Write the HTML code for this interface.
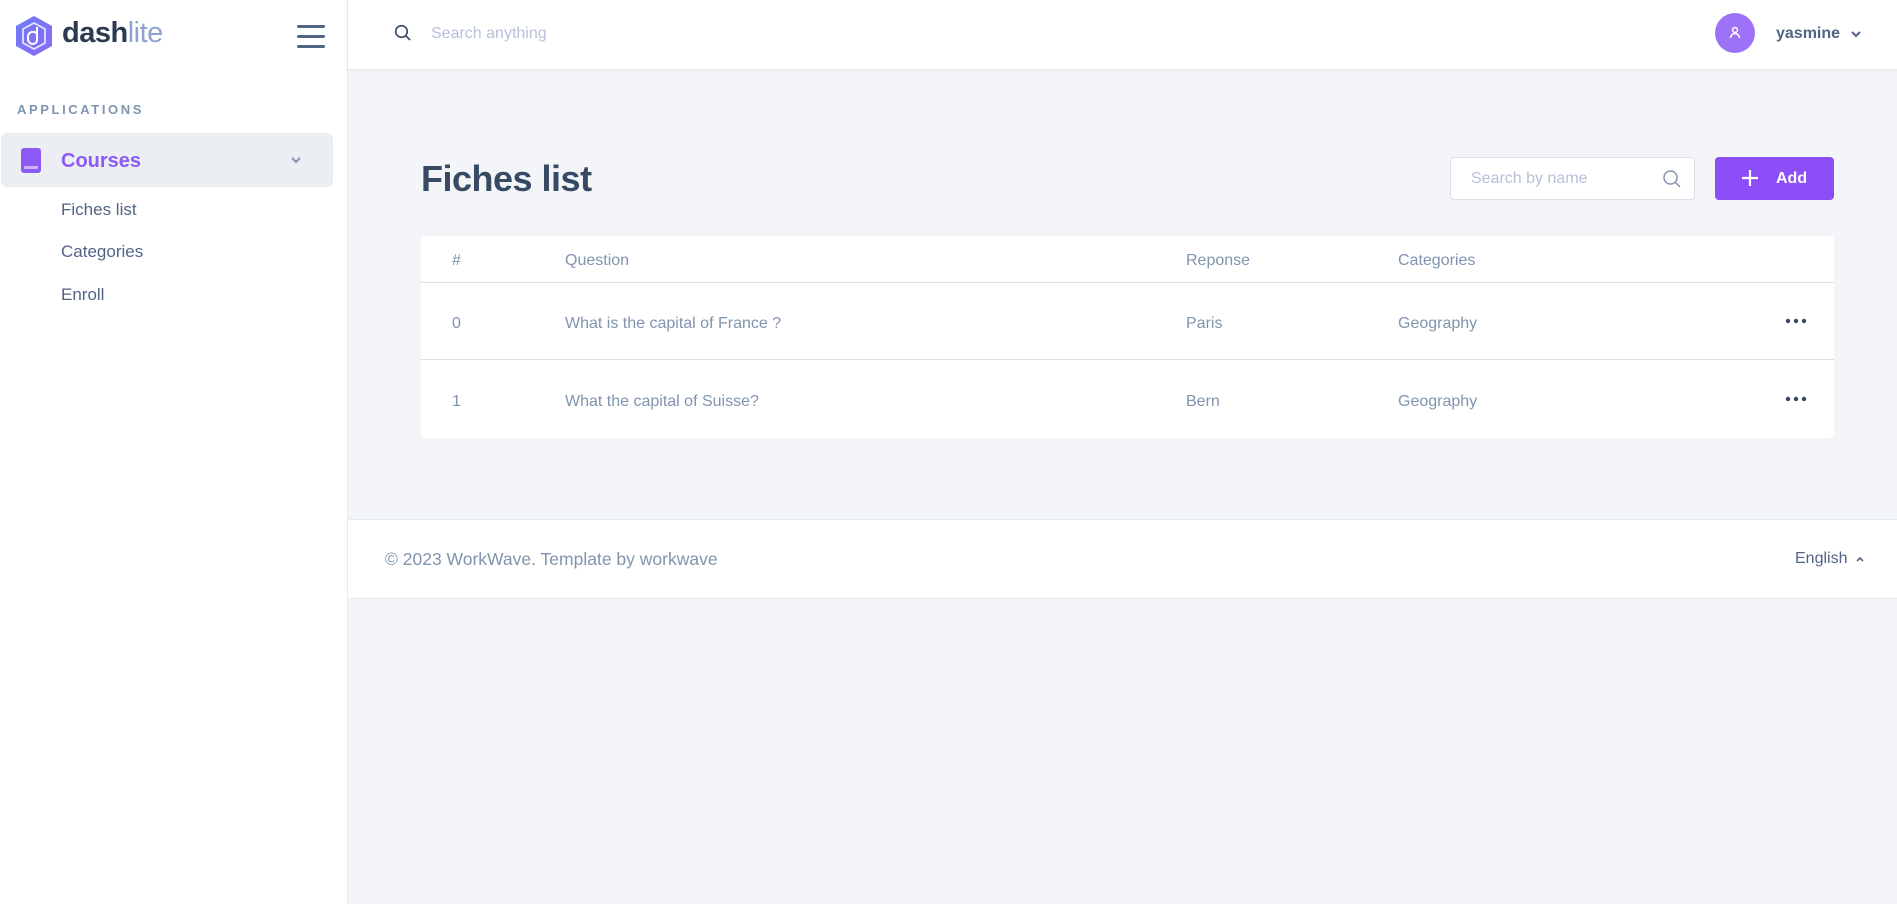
<!DOCTYPE html>
<html><head><meta charset="utf-8"><style>
*{box-sizing:border-box;margin:0;padding:0}
body{width:1897px;height:904px;background:#f4f5f8;font-family:"Liberation Sans",sans-serif;position:relative;overflow:hidden;color:#526484}
.side{position:absolute;left:0;top:0;width:348px;height:904px;background:#fff;border-right:1px solid #e5e9f2}
.hdr{position:absolute;left:348px;top:0;right:0;height:70px;background:#fff;border-bottom:1px solid #e5e9f2;box-shadow:0 1px 3px rgba(0,0,0,.04)}
.abs{position:absolute}
.card{position:absolute;left:421px;top:236px;width:1413px;height:202px;background:#fff;border-radius:4px}
.row{position:absolute;left:0;right:0;border-bottom:1px solid #dbdfea}
.t{position:absolute;font-size:16px;color:#8094ae;white-space:nowrap}
.dots{position:absolute}
</style></head><body>
<div class="side">
  <svg class="abs" style="left:15px;top:15px" width="38" height="42" viewBox="0 0 38 42">
    <defs><linearGradient id="g" x1="0" y1="0" x2="1" y2="1"><stop offset="0" stop-color="#6b7cf6"/><stop offset="1" stop-color="#8b6af7"/></linearGradient></defs>
    <polygon points="19,1 37,11 37,31 19,41 1,31 1,11" fill="url(#g)"/>
    <path d="M19 8 L30 14 V28 L19 34 L8 28 V14 Z" fill="none" stroke="#fff" stroke-width="1.8" opacity=".8"/>
    <path d="M22 12 V25 a4 4 0 0 1 -4 4 a5 5 0 0 1 -5 -5 v-3 a5 5 0 0 1 9 -2" fill="none" stroke="#fff" stroke-width="2"/>
  </svg>
  <div class="abs" style="left:62px;top:17px;font-size:29px;font-weight:bold;color:#2b3a4f;letter-spacing:-0.5px">dash<span style="color:#8ea3d3;font-weight:normal">lite</span></div>
  <div class="abs" style="left:297px;top:25px;width:28px;height:3px;background:#526484;border-radius:2px"></div>
  <div class="abs" style="left:297px;top:35px;width:28px;height:3px;background:#526484;border-radius:2px"></div>
  <div class="abs" style="left:297px;top:45px;width:28px;height:3px;background:#526484;border-radius:2px"></div>
  <div class="abs" style="left:17px;top:102px;font-size:13px;font-weight:bold;letter-spacing:2.6px;color:#8094ae">APPLICATIONS</div>
  <div class="abs" style="left:1px;top:133px;width:332px;height:54px;background:#ebeef2;border-radius:6px"></div>
  <div class="abs" style="left:21px;top:148px;width:20px;height:25px;background:#8d5af5;border-radius:3px"></div>
  <div class="abs" style="left:24px;top:166px;width:14px;height:3px;background:#c9b3fb;border-radius:1px"></div>
  <div class="abs" style="left:61px;top:150px;font-size:20px;font-weight:bold;color:#8d5af5">Courses</div>
  <svg class="abs" style="left:290px;top:156px" width="12" height="8" viewBox="0 0 12 8"><path d="M2 2 L6 6 L10 2" stroke="#8094ae" stroke-width="2" fill="none"/></svg>
  <div class="abs" style="left:61px;top:200px;font-size:17px;color:#526484">Fiches list</div>
  <div class="abs" style="left:61px;top:242px;font-size:17px;color:#526484">Categories</div>
  <div class="abs" style="left:61px;top:285px;font-size:17px;color:#526484">Enroll</div>
</div>
<div class="hdr">
  <svg class="abs" style="left:46px;top:24px" width="18" height="18" viewBox="0 0 18 18"><circle cx="7.5" cy="7.5" r="5.8" stroke="#364a63" stroke-width="1.6" fill="none"/><path d="M12 12 L16 16" stroke="#364a63" stroke-width="1.6"/></svg>
  <div class="abs" style="left:83px;top:25px;font-size:16px;color:#b6c0d9">Search anything</div>
  <div class="abs" style="left:1367px;top:13px;width:40px;height:40px;border-radius:50%;background:#9d72f7"></div>
  <svg class="abs" style="left:1379px;top:25px" width="16" height="16" viewBox="0 0 16 16"><circle cx="8" cy="5" r="2.5" stroke="#fff" stroke-width="1.4" fill="none"/><path d="M3.5 13 a4.5 4.5 0 0 1 9 0" stroke="#fff" stroke-width="1.4" fill="none"/></svg>
  <div class="abs" style="left:1428px;top:25px;font-size:16px;font-weight:bold;color:#526484">yasmine</div>
  <svg class="abs" style="left:1502px;top:30px" width="12" height="8" viewBox="0 0 12 8"><path d="M2 2 L6 6 L10 2" stroke="#526484" stroke-width="2" fill="none"/></svg>
</div>
<div class="abs" style="left:421px;top:158px;font-size:36px;font-weight:bold;color:#364a63;letter-spacing:-0.5px">Fiches list</div>
<div class="abs" style="left:1450px;top:157px;width:245px;height:43px;background:#fff;border:1px solid #dbdfea;border-radius:4px"></div>
<div class="abs" style="left:1471px;top:170px;font-size:16px;color:#b6c0d9">Search by name</div>
<svg class="abs" style="left:1662px;top:169px" width="20" height="20" viewBox="0 0 20 20"><circle cx="8.5" cy="8.5" r="6.5" stroke="#8094ae" stroke-width="1.5" fill="none"/><path d="M13.5 13.5 L18 18" stroke="#8094ae" stroke-width="1.5"/></svg>
<div class="abs" style="left:1715px;top:157px;width:119px;height:43px;background:#8d4df7;border-radius:4px"></div>
<svg class="abs" style="left:1740px;top:168px" width="20" height="20" viewBox="0 0 20 20"><path d="M10 2 V18 M2 10 H18" stroke="#fff" stroke-width="2.2"/></svg>
<div class="abs" style="left:1776px;top:170px;font-size:16px;font-weight:bold;color:#fff">Add</div>
<div class="card">
  <div class="row" style="top:0;height:47px"></div>
  <div class="row" style="top:47px;height:77px"></div>
  <div class="t" style="left:31px;top:16px">#</div>
  <div class="t" style="left:144px;top:16px">Question</div>
  <div class="t" style="left:765px;top:16px">Reponse</div>
  <div class="t" style="left:977px;top:16px">Categories</div>
  <div class="t" style="left:31px;top:79px">0</div>
  <div class="t" style="left:144px;top:79px">What is the capital of France ?</div>
  <div class="t" style="left:765px;top:79px">Paris</div>
  <div class="t" style="left:977px;top:79px">Geography</div>
  <svg class="dots" style="left:1364px;top:82px" width="22" height="6" viewBox="0 0 22 6"><circle cx="3" cy="3" r="2.2" fill="#364a63"/><circle cx="11" cy="3" r="2.2" fill="#364a63"/><circle cx="19" cy="3" r="2.2" fill="#364a63"/></svg>
  <div class="t" style="left:31px;top:157px">1</div>
  <div class="t" style="left:144px;top:157px">What the capital of Suisse?</div>
  <div class="t" style="left:765px;top:157px">Bern</div>
  <div class="t" style="left:977px;top:157px">Geography</div>
  <svg class="dots" style="left:1364px;top:160px" width="22" height="6" viewBox="0 0 22 6"><circle cx="3" cy="3" r="2.2" fill="#364a63"/><circle cx="11" cy="3" r="2.2" fill="#364a63"/><circle cx="19" cy="3" r="2.2" fill="#364a63"/></svg>
</div>
<div class="abs" style="left:348px;top:519px;right:0;height:80px;background:#fff;border-top:1px solid #e5e9f2;border-bottom:1px solid #e5e9f2"></div>
<div class="abs" style="left:385px;top:549px;font-size:17.5px;color:#8094ae">© 2023 WorkWave. Template by workwave</div>
<div class="abs" style="left:1795px;top:550px;font-size:16px;color:#526484">English</div>
<svg class="abs" style="left:1855px;top:555px" width="10" height="8" viewBox="0 0 10 8"><path d="M2 6 L5 3 L8 6" stroke="#526484" stroke-width="1.6" fill="none"/></svg>
</body></html>
